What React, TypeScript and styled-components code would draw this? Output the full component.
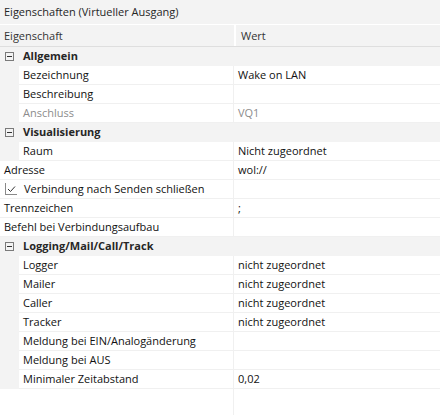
import styled, { createGlobalStyle } from "styled-components";
import { FC } from "react";

const GlobalStyle = createGlobalStyle`
  html, body {
    margin: 0;
    padding: 0;
    background: #fff;
  }
  body {
    font-family: "Open Sans", "Noto Sans", "DejaVu Sans", sans-serif;
    font-size: 11px;
    color: #111;
  }
`;

const NAME_WIDTH = 233;
const INDENT = 19;

const Panel = styled.div`
  width: 440px;
  height: 415px;
  display: flex;
  flex-direction: column;
  background: #fff;
  overflow: hidden;
`;

const TitleBar = styled.div`
  height: 24px;
  padding: 0 0 2px 4px;
  box-sizing: border-box;
  display: flex;
  align-items: center;
  background: #f3f3f3;
  border-bottom: 1px solid #fff;
  height: 25px;
  color: #262626;
`;

const HeaderRow = styled.div`
  height: 21px;
  display: flex;
  background: #f3f3f3;
  border-bottom: 1px solid #dedede;
`;

const HeaderCell = styled.div<{ $first?: boolean }>`
  display: flex;
  align-items: center;
  padding-left: ${(p) => (p.$first ? "4px" : "5px")};
  padding-bottom: 1px;
  width: ${(p) => (p.$first ? `${NAME_WIDTH + 1}px` : "auto")};
  flex: ${(p) => (p.$first ? "none" : "1")};
  border-left: ${(p) => (p.$first ? "none" : "2px solid #fff")};
  box-sizing: border-box;
  color: #333;
`;

const Row = styled.div`
  height: 19px;
  display: flex;
  background: #f3f3f3;
`;

const CategoryRow = styled(Row)`
  align-items: center;
  padding-bottom: 2px;
  box-sizing: border-box;
  font-weight: 700;
  color: #262626;
`;

const Toggle = styled.span`
  width: 9px;
  height: 9px;
  margin: 2px 9px 0 5px;
  box-sizing: border-box;
  border: 1px solid #7a7a7a;
  position: relative;
  flex: none;
  &::after {
    content: "";
    position: absolute;
    left: 1px;
    right: 1px;
    top: 3px;
    height: 1px;
    background: #333;
  }
`;

const NameCell = styled.div<{ $indent?: boolean; $muted?: boolean; $wide?: boolean }>`
  display: flex;
  align-items: center;
  box-sizing: border-box;
  margin-left: ${(p) => (p.$indent ? `${INDENT}px` : "0")};
  width: ${(p) => (p.$indent ? NAME_WIDTH - INDENT : NAME_WIDTH)}px;
  padding: 0 0 2px 4px;
  background: #fff;
  border-bottom: 1px solid #f0f0f0;
  color: ${(p) => (p.$muted ? "#8c8c8c" : "#111")};
  white-space: nowrap;
  overflow: ${(p) => (p.$wide ? "visible" : "hidden")};
  position: relative;
  z-index: ${(p) => (p.$wide ? 1 : 0)};
`;

const ValueCell = styled.div<{ $muted?: boolean }>`
  flex: 1;
  display: flex;
  align-items: center;
  padding: 0 0 2px 4px;
  background: #fff;
  border-left: 1px solid #f0f0f0;
  border-bottom: 1px solid #f0f0f0;
  color: ${(p) => (p.$muted ? "#8c8c8c" : "#111")};
  white-space: nowrap;
`;

const Check = styled.span`
  width: 12px;
  height: 12px;
  margin: 2px 7px 0 1px;
  box-sizing: border-box;
  border-left: 1px solid #8a8a8a;
  border-bottom: 1px solid #8a8a8a;
  display: flex;
  align-items: center;
  justify-content: center;
  flex: none;
`;

const Filler = styled.div`
  flex: 1;
  display: flex;
`;

const FillerName = styled.div`
  width: ${NAME_WIDTH}px;
`;

const FillerValue = styled.div`
  flex: 1;
  border-left: 1px solid #f0f0f0;
`;

type Prop = {
  name: string;
  value?: string;
  indent?: boolean;
  muted?: boolean;
  check?: boolean;
};

type Group = { title: string; items: Prop[] } | { item: Prop };

const data: Group[] = [
  {
    title: "Allgemein",
    items: [
      { name: "Bezeichnung", value: "Wake on LAN", indent: true },
      { name: "Beschreibung", indent: true },
      { name: "Anschluss", value: "VQ1", indent: true, muted: true },
    ],
  },
  {
    title: "Visualisierung",
    items: [{ name: "Raum", value: "Nicht zugeordnet", indent: true }],
  },
  { item: { name: "Adresse", value: "wol://" } },
  { item: { name: "Verbindung nach Senden schließen", check: true } },
  { item: { name: "Trennzeichen", value: ";" } },
  { item: { name: "Befehl bei Verbindungsaufbau" } },
  {
    title: "Logging/Mail/Call/Track",
    items: [
      { name: "Logger", value: "nicht zugeordnet", indent: true },
      { name: "Mailer", value: "nicht zugeordnet", indent: true },
      { name: "Caller", value: "nicht zugeordnet", indent: true },
      { name: "Tracker", value: "nicht zugeordnet", indent: true },
      { name: "Meldung bei EIN/Analogänderung", indent: true },
      { name: "Meldung bei AUS", indent: true },
      { name: "Minimaler Zeitabstand", value: "0,02", indent: true },
    ],
  },
];

const CheckMark = () => (
  <svg width="9" height="8" viewBox="0 0 9 8">
    <path d="M1 4 L3.5 6.5 L8 1.5" fill="none" stroke="#333" strokeWidth="1" />
  </svg>
);

const PropRow: FC<{ prop: Prop }> = ({ prop }) => (
  <Row>
    <NameCell $indent={prop.indent} $muted={prop.muted} $wide={prop.check}>
      {prop.check && (
        <Check>
          <CheckMark />
        </Check>
      )}
      {prop.name}
    </NameCell>
    <ValueCell $muted={prop.muted}>{prop.value}</ValueCell>
  </Row>
);

export default function App() {
  return (
    <>
      <GlobalStyle />
      <Panel>
        <TitleBar>Eigenschaften (Virtueller Ausgang)</TitleBar>
        <HeaderRow>
          <HeaderCell $first>Eigenschaft</HeaderCell>
          <HeaderCell>Wert</HeaderCell>
        </HeaderRow>
        {data.map((g, i) =>
          "title" in g ? (
            <div key={i}>
              <CategoryRow>
                <Toggle />
                {g.title}
              </CategoryRow>
              {g.items.map((p) => (
                <PropRow key={p.name} prop={p} />
              ))}
            </div>
          ) : (
            <PropRow key={i} prop={g.item} />
          )
        )}
        <Filler>
          <FillerName />
          <FillerValue />
        </Filler>
      </Panel>
    </>
  );
}
